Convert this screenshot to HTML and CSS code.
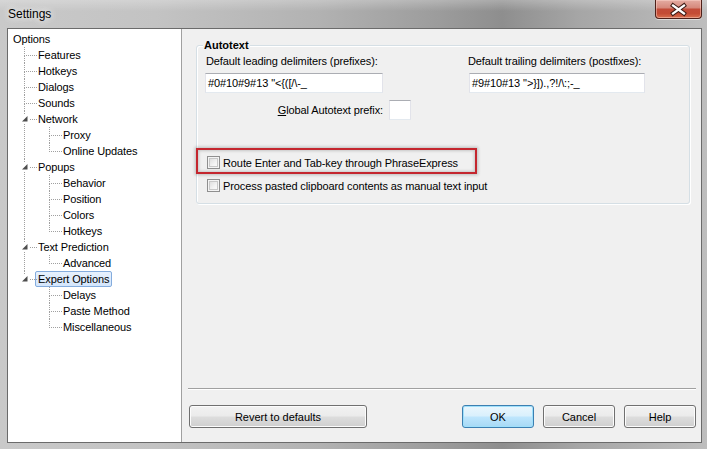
FILE: index.html
```html
<!DOCTYPE html>
<html>
<head>
<meta charset="utf-8">
<title>Settings</title>
<link rel="stylesheet" href="styles.css">
</head>
<body>
<div class="window">
  <div class="titlebar">
    <span class="title">Settings</span>
    <div class="close">
      <svg width="45" height="17" viewBox="0 0 45 17">
        <path d="M17 4.5 L28 12.5 M28 4.5 L17 12.5" stroke="#3b1a14" stroke-width="4.2" stroke-linecap="square" fill="none"/>
        <path d="M17 4.5 L28 12.5 M28 4.5 L17 12.5" stroke="#ffffff" stroke-width="2.2" stroke-linecap="square" fill="none"/>
      </svg>
    </div>
  </div>
  <div class="client">
    <div class="tree">
      <ul class="root">
        <li><span class="label">Options</span>
          <ul class="l1">
            <li><span class="label">Features</span></li>
            <li><span class="label">Hotkeys</span></li>
            <li><span class="label">Dialogs</span></li>
            <li><span class="label">Sounds</span></li>
            <li><span class="exp"><svg width="9" height="9" viewBox="0 0 9 9"><path d="M7.5 2 L7.5 7.5 L2 7.5 Z" fill="#4d4d4d"/></svg></span><span class="label">Network</span>
              <ul class="l2">
                <li><span class="label">Proxy</span></li>
                <li><span class="label">Online Updates</span></li>
              </ul>
            </li>
            <li><span class="exp"><svg width="9" height="9" viewBox="0 0 9 9"><path d="M7.5 2 L7.5 7.5 L2 7.5 Z" fill="#4d4d4d"/></svg></span><span class="label">Popups</span>
              <ul class="l2">
                <li><span class="label">Behavior</span></li>
                <li><span class="label">Position</span></li>
                <li><span class="label">Colors</span></li>
                <li><span class="label">Hotkeys</span></li>
              </ul>
            </li>
            <li><span class="exp"><svg width="9" height="9" viewBox="0 0 9 9"><path d="M7.5 2 L7.5 7.5 L2 7.5 Z" fill="#4d4d4d"/></svg></span><span class="label">Text Prediction</span>
              <ul class="l2">
                <li><span class="label">Advanced</span></li>
              </ul>
            </li>
            <li><span class="exp"><svg width="9" height="9" viewBox="0 0 9 9"><path d="M7.5 2 L7.5 7.5 L2 7.5 Z" fill="#4d4d4d"/></svg></span><span class="label sel">Expert Options</span>
              <ul class="l2">
                <li><span class="label">Delays</span></li>
                <li><span class="label">Paste Method</span></li>
                <li><span class="label">Miscellaneous</span></li>
              </ul>
            </li>
          </ul>
        </li>
      </ul>
    </div>
    <div class="panel">
      <div class="group">
        <div class="group-title">Autotext</div>
        <div class="cols">
          <div class="col col-left">
            <div class="field-label">Default leading delimiters (prefixes):</div>
            <div class="textbox tb-left">#0#10#9#13 "&lt;{([/\-_</div>
          </div>
          <div class="col col-right">
            <div class="field-label">Default trailing delimiters (postfixes):</div>
            <div class="textbox tb-right">#9#10#13 "&gt;}]).,?!/\:;-_</div>
          </div>
        </div>
        <div class="prefix-row">
          <span><u>G</u>lobal Autotext prefix:</span>
          <div class="textbox tb-small"></div>
        </div>
        <div class="check-row first">
          <span class="checkbox"></span>
          <span>Route Enter and Tab-key through PhraseExpress</span>
          <div class="annotation"></div>
        </div>
        <div class="check-row">
          <span class="checkbox"></span>
          <span>Process pasted clipboard contents as manual text input</span>
        </div>
      </div>
      <div class="separator"></div>
      <div class="buttons">
        <button class="btn revert">Revert to defaults</button>
        <span class="spacer"></span>
        <button class="btn default">OK</button>
        <button class="btn">Cancel</button>
        <button class="btn">Help</button>
      </div>
    </div>
  </div>
</div>
</body>
</html>
```
FILE: styles.css
```css
* { box-sizing: border-box; }
html, body { margin: 0; padding: 0; }
body {
  font-family: "Segoe UI", "Liberation Sans", Arial, sans-serif;
  font-size: 11px;
  letter-spacing: -0.1px;
  color: #000;
}
.window {
  width: 707px;
  height: 449px;
  display: flex;
  flex-direction: column;
  background: linear-gradient(90deg, #c9c9c9 0%, #c3c3c3 22%, #b2b2b2 45%, #9c9c9c 62%, #8e8e8e 71%, #a6a6a6 82%, #bebebe 100%);
  overflow: hidden;
}
.titlebar {
  height: 28px;
  flex: none;
  display: flex;
  align-items: center;
  padding-left: 8px;
  background: linear-gradient(180deg, rgba(255,255,255,0.25) 0%, rgba(255,255,255,0) 40%);
}
.title {
  font-size: 12px;
  letter-spacing: 0;
  text-shadow: 0 0 6px rgba(255,255,255,0.9), 0 0 10px rgba(255,255,255,0.7);
}
.close {
  margin-left: auto;
  margin-right: 5px;
  align-self: flex-start;
  width: 47px;
  height: 19px;
  border: 1px solid #4e2019;
  border-top: none;
  border-radius: 0 0 4px 4px;
  background: linear-gradient(180deg, #e4aca2 0%, #d68a7d 42%, #c24b38 52%, #c44c35 75%, #d8704f 100%);
  box-shadow: inset 0 0 0 1px rgba(255,220,210,0.45), 0 1px 0 rgba(255,255,255,0.5);
  display: flex;
  align-items: center;
  justify-content: center;
}
.close svg { display: block; }
.client {
  flex: 1;
  display: flex;
  margin: 0 5px 6px 7px;
  border: 1px solid #6b6b6b;
  background: #f0f0f0;
  min-height: 0;
}
/* tree */
.tree {
  width: 174px;
  flex: none;
  background: #fff;
  border-right: 1px solid #a0a0a0;
  padding: 2px 0 0 5px;
}
.tree ul { list-style: none; margin: 0; padding: 0; }
.tree .label {
  display: block;
  width: fit-content;
  height: 16px;
  line-height: 14px;
  border: 1px solid transparent;
  border-radius: 2px;
  padding: 0 2px;
  margin-left: -3px;
  white-space: nowrap;
}
.tree .label.sel {
  background: linear-gradient(180deg, #e7f1fd 0%, #d4e6fc 100%);
  border-color: #84acdd;
}
.tree .l1, .tree .l2 { margin-left: 11px; }
.tree .l1 > li, .tree .l2 > li {
  position: relative;
  padding-left: 14px;
}
.tree .l1 > li::before, .tree .l2 > li::before {
  content: "";
  position: absolute;
  left: 0;
  top: 0;
  width: 12px;
  height: 8px;
  border-left: 1px dotted #a0a0a0;
  border-bottom: 1px dotted #a0a0a0;
}
.tree .l1 > li:not(:last-child)::after, .tree .l2 > li:not(:last-child)::after {
  content: "";
  position: absolute;
  left: 0;
  top: 8px;
  bottom: 0;
  border-left: 1px dotted #a0a0a0;
}
.tree .exp {
  position: absolute;
  left: -4px;
  top: 3px;
  width: 9px;
  height: 9px;
  background: #fff;
  z-index: 1;
}
.tree .exp svg { display: block; }
/* right panel */
.panel {
  flex: 1;
  display: flex;
  flex-direction: column;
  padding: 0 5px 14px 6px;
}
.group {
  margin-top: 16px;
  margin-left: 8px;
  width: 494px;
  border: 1px solid #d5dfe5;
  border-radius: 3px;
  box-shadow: inset 1px 1px 0 #fff, 1px 1px 0 #fff;
  padding: 0 0 6px 8px;
}
.group-title {
  display: block;
  width: fit-content;
  margin: -8px 0 0 -2px;
  padding: 0 1px;
  line-height: 15px;
  font-weight: bold;
  letter-spacing: 0;
  background: #f0f0f0;
}
.cols {
  display: flex;
  margin-top: 1px;
}
.col-left { width: 263px; }
.field-label {
  line-height: 15px;
  white-space: nowrap;
}
.col-left .field-label { margin-left: 1px; }
.textbox {
  height: 20px;
  margin-top: 4px;
  background: #fff;
  border: 1px solid #dbdfe6;
  border-top-color: #abadb3;
  border-left-color: #e2e3ea;
  border-right-color: #e2e3ea;
  border-bottom-color: #e3e9ef;
  line-height: 18px;
  padding-left: 2px;
  white-space: nowrap;
}
.tb-left { width: 178px; }
.tb-right { width: 176px; margin-left: 1px; }
.prefix-row {
  width: 206px;
  margin-top: 7px;
  display: flex;
  justify-content: flex-end;
  align-items: center;
  gap: 6px;
}
.tb-small { width: 22px; margin-top: 0; }
.check-row {
  position: relative;
  height: 23px;
  display: flex;
  align-items: center;
  gap: 3px;
  padding-left: 2px;
}
.check-row.first { margin-top: 31px; }
.checkbox {
  width: 13px;
  height: 13px;
  flex: none;
  border: 1px solid #8f8f8f;
  background: linear-gradient(135deg, #d6d6d6 0%, #f4f4f4 60%, #fdfdfd 100%);
  box-shadow: inset 0 0 0 1px #f4f4f4, inset 0 0 0 2px #c8c8c8;
}
.annotation {
  position: absolute;
  left: -9px;
  top: -3px;
  width: 281px;
  height: 26px;
  border: 2px solid #c4262e;
  box-shadow: 0 0 3px 1px rgba(0,0,0,0.22), inset 0 0 3px 1px rgba(0,0,0,0.18);
  pointer-events: none;
}
.separator {
  margin-top: auto;
  height: 2px;
  border-top: 1px solid #a0a0a0;
  border-bottom: 1px solid #ffffff;
}
.buttons {
  display: flex;
  align-items: center;
  gap: 9px;
  margin-top: 15px;
}
.spacer { flex: 1; }
.btn {
  font: inherit;
  letter-spacing: 0;
  color: #000;
  height: 23px;
  width: 72px;
  padding: 0;
  border: 1px solid #707070;
  border-radius: 3px;
  background: linear-gradient(180deg, #f2f2f2 0%, #ebebeb 48%, #dddddd 52%, #cfcfcf 100%);
  box-shadow: inset 0 0 0 1px #fcfcfc;
}
.btn.revert { width: 178px; margin-left: 1px; }
.btn.default {
  border-color: #3c7fb1;
  background: linear-gradient(180deg, #eaf6fd 0%, #d9f0fc 48%, #bee6fd 52%, #a7d9f5 100%);
  box-shadow: inset 0 0 0 1px #9fe0fb;
}
```
